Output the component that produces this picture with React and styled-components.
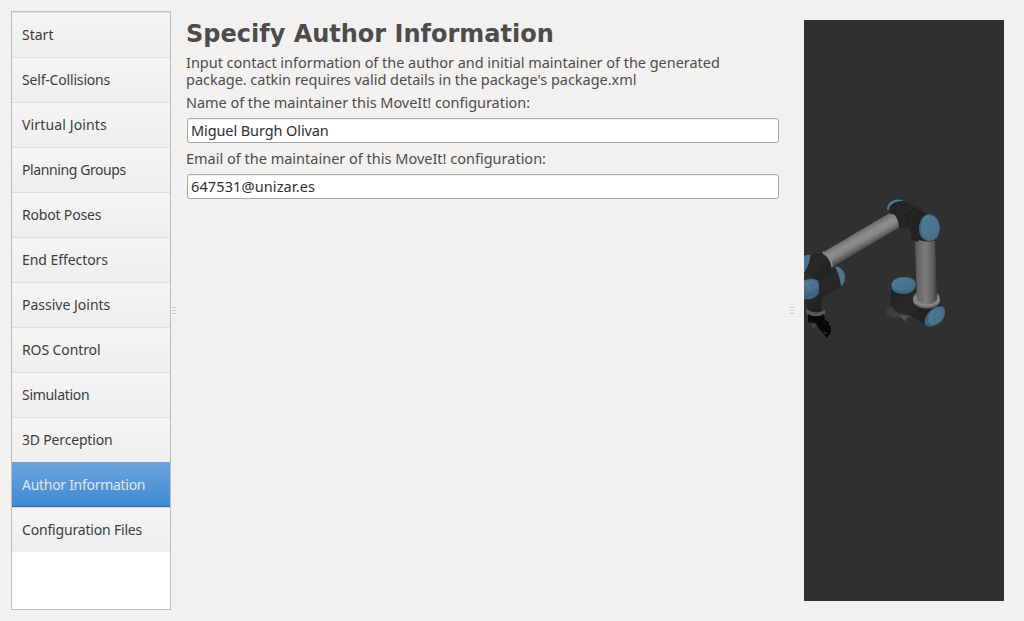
import React from 'react';
import styled, { createGlobalStyle } from 'styled-components';

const GlobalStyle = createGlobalStyle`
  * { box-sizing: border-box; }
  body {
    margin: 0;
    background: #f2f1f0;
    color: #4c4c4c;
    font-family: "Noto Sans", "Open Sans", sans-serif;
    font-size: 14px;
  }
`;

const Window = styled.div`
  display: flex;
  width: 1024px;
  height: 621px;
  padding: 11px 20px 11px 11px;
  background: #f2f1f0;
  overflow: hidden;
`;

const Sidebar = styled.nav`
  flex: 0 0 160px;
  height: 599px;
  border: 1px solid #bfbfba;
  background: #fff;
`;

const NavItem = styled.div`
  display: flex;
  align-items: center;
  height: 45px;
  padding: 0 0 ${p => (p.$active ? 0 : 1)}px 10px;
  border-top: 1px solid ${p => (p.$active ? '#6ba3dc' : '#dddddd')};
  border-bottom: ${p => (p.$active ? '1px solid #2a6cb0' : 'none')};
  background: ${p => (p.$active
    ? 'linear-gradient(#6ba3dc, #3f8ad3)'
    : 'linear-gradient(#f5f5f5, #eeeeee)')};
  color: ${p => (p.$active ? '#e0e6ee' : '#3c3c3c')};
  font-size: 14px;
  letter-spacing: ${p => p.$track || 0}px;
  white-space: nowrap;
`;

const Handle = styled.div`
  display: flex;
  flex-direction: column;
  justify-content: center;
  align-items: flex-start;
  gap: 2px;
  width: 7px;
  height: 599px;
  padding-left: 1px;
`;

const Grip = styled.i`
  width: 4px;
  height: 1px;
  background: #c9c8c6;
  box-shadow: 0 1px #fbfbfb;
`;

const Content = styled.main`
  width: 611px;
  padding: 9px 10px 0 8px;
`;

const Title = styled.h1`
  margin: 0;
  font: bold 24px/28px "DejaVu Sans", sans-serif;
  white-space: nowrap;
`;

const Description = styled.p`
  max-width: 560px;
  margin: 6px 0 0;
  font-size: 14.5px;
  line-height: 17px;
  letter-spacing: -0.03px;
`;

const Label = styled.span`
  display: block;
  font-size: 14.5px;
  line-height: 17px;
  letter-spacing: ${p => p.$track || 0}px;
  white-space: nowrap;
`;

const Field = styled.label`
  display: block;
  height: 50px;
  margin-top: 6px;
`;

const Input = styled.div`
  width: 592px;
  height: 25px;
  margin: 7px 0 0 1px;
  padding-left: 3px;
  border: 1px solid #aaa8a2;
  border-radius: 3px;
  background: #fff;
  box-shadow: inset 0 1px #f0efee;
  color: #2f2f2f;
  font-size: 14.5px;
  line-height: 22px;
  letter-spacing: ${p => p.$track || 0}px;
`;

const Viewport = styled.div`
  width: 200px;
  height: 581px;
  margin: 9px 0 0 8px;
  background: #303030;
`;

const pages = [
  ['Start', 0],
  ['Self-Collisions', -0.18],
  ['Virtual Joints', 0.14],
  ['Planning Groups', -0.4],
  ['Robot Poses', -0.18],
  ['End Effectors', -0.06],
  ['Passive Joints', 0],
  ['ROS Control', -0.1],
  ['Simulation', -0.3],
  ['3D Perception', -0.18],
  ['Author Information', -0.29],
  ['Configuration Files', -0.18],
];

function Robot() {
  return (
    <svg width="200" height="581" viewBox="804 20 200 581" display="block">
      <defs>
        <linearGradient id="arm" gradientUnits="userSpaceOnUse" x1="855" y1="232" x2="864" y2="248">
          <stop offset="0" stopColor="#686868" />
          <stop offset="0.4" stopColor="#8d8d8d" />
          <stop offset="0.65" stopColor="#858585" />
          <stop offset="1" stopColor="#505050" />
        </linearGradient>
        <linearGradient id="post">
          <stop offset="0" stopColor="#484848" />
          <stop offset="0.15" stopColor="#656565" />
          <stop offset="0.5" stopColor="#7c7c7c" />
          <stop offset="0.85" stopColor="#5a5a5a" />
          <stop offset="1" stopColor="#363636" />
        </linearGradient>
        <linearGradient id="joint" x1="0" y1="0" x2="1" y2="1">
          <stop offset="0" stopColor="#1d1d1d" />
          <stop offset="0.4" stopColor="#2a2a2a" />
          <stop offset="1" stopColor="#1b1b1b" />
        </linearGradient>
        <linearGradient id="forearm" x1="0" y1="0" x2="0.6" y2="1">
          <stop offset="0" stopColor="#1c1c1c" />
          <stop offset="0.5" stopColor="#292929" />
          <stop offset="1" stopColor="#1b1b1b" />
        </linearGradient>
        <linearGradient id="cap" x1="0" y1="0" x2="1" y2="1">
          <stop offset="0" stopColor="#527c95" />
          <stop offset="1" stopColor="#416b87" />
        </linearGradient>
      </defs>

      <path d="M887 309l4-3 22 10-4 2-4 4-3-4-7-1-1 2-4-3-3-1z" fill="#3d3d3d" />
      <path d="M900 315l8 1-4 5z" fill="#555" />
      <path d="M891 286v19c2 7 11 10 18 10l19 11 8-3 4-19-24-5-1-14z" fill="url(#joint)" />
      <path d="M891.500 285c1-5 6-8 13-8 6 0 11 2 11 6v4c-2 5-7 7-12 7-6 0-12-3-12-6z" fill="#3c657e" />
      <ellipse cx="903.500" cy="284.500" rx="11.800" ry="7" fill="url(#cap)" />

      <path d="M912 301l11 20 7 5 12-17-2-9z" fill="#222" />
      <path d="M925 319c2-7 10-14 17-13 5 2 3 10-1 15-4 4-10 7-14 5-2-1-3-4-2-7z" fill="#3a637e" />
      <ellipse cx="936.500" cy="316" rx="10" ry="7" transform="rotate(-48 936.500 316)" fill="url(#cap)" />
      <path d="M935 314l1-1M938 317l1-1M934 320h1" stroke="#375d74" fill="none" />
      <path d="M913 298c0-10 27-10 27 0v4c-2 8-23 9-27 0z" fill="#656565" />
      <ellipse cx="926.500" cy="299.500" rx="13.200" ry="7.200" fill="#858585" />
      <path d="M914.500 238h20.500l2 61c-3 7-17 7-20 0z" fill="url(#post)" />

      <path d="M887 210c0-9 8-12 16-10l-9 9z" fill="#4c7892" />
      <path d="M889 208c3-6 9-7 15-7l17 7 7 13-10 21-6-2-2-11-8-2-12-16z" fill="url(#joint)" />
      <path d="M822 253l66-39c8-2 13 6 12 13l-68 40c-2-7-5-11-10-14z" fill="url(#arm)" />
      <path d="M823 252c5 2 9 8 9 15" fill="none" stroke="#8b8b8b" strokeWidth="1.500" />
      <path d="M889 211c6 2 10 9 10 17l6 1 6-6 1-12-8-7-12 2z" fill="#252525" />
      <path d="M902 202c4 1 10 5 12 10l-6 10 4 12c4 8 17 9 24 6l-6-25-15-6z" fill="#222" />
      <path d="M916 208c-6 3-9 8-9 13" fill="none" stroke="#161616" />
      <path d="M919 229c0-8 4-15 10-15 6 0 10 6 11 13 0 9-5 15-11 14-6 0-10-5-10-12z" fill="#3b657f" />
      <ellipse cx="930" cy="228" rx="9.300" ry="12.500" fill="url(#cap)" />
      <path d="M922 221q3-5 7-5M925 226v1M935 227v1" fill="none" stroke="#638ba2" />

      <path d="M804 256q3-2 7-1c-1 7-3 13-7 18z" fill="#47738c" />
      <path d="M811 255l10-2c5 3 9 7 10 14l-8 16-8-4-11-6q4-5 7-18z" fill="url(#joint)" />
      <path d="M806 302l1-11 9-13c5-7 13-11 22-10l5 17-21 13-1 13c-4 3-11 3-14-1z" fill="url(#forearm)" />
      <path d="M835 267c5-1 10 4 10 10 0 4-1 7-4 9-1-8-3-14-6-19z" fill="#497691" />
      <path d="M804 281c6-4 16-3 15 4v7c-3 7-10 8-15 7z" fill="#3d6781" />
      <ellipse cx="809.500" cy="286" rx="9" ry="6.500" fill="url(#cap)" />
      <path d="M807 284h2M812 283h1M809 288h2M814 287h1" stroke="#6991a6" />
      <path d="M806 308c4 5 14 6 19 2v4c-4 4-14 5-18 0z" fill="#5b5b5b" />
      <path d="M808 314c5 3 11 3 16 0l1 6 4 2v3l2 2v5l-4 6-4-5-4-4-3-6-8-1z" fill="#080808" />
      <path d="M811 324h5l-2 5zM823 321l3 4" fill="#4c4c4c" stroke="#333" strokeWidth="0.500" />
      <path d="M824 332l3 2" stroke="#444" strokeWidth="1" />
    </svg>
  );
}

function Splitter() {
  return <Handle><Grip /><Grip /><Grip /></Handle>;
}

export default function App() {
  return (
    <>
      <GlobalStyle />
      <Window>
        <Sidebar>
          {pages.map(([name, track], i) => (
            <NavItem key={name} $track={track} $active={i === 10}>{name}</NavItem>
          ))}
        </Sidebar>
        <Splitter />
        <Content>
          <Title>Specify Author Information</Title>
          <Description>
            Input contact information of the author and initial maintainer of the generated
            package. catkin requires valid details in the package's package.xml
          </Description>
          <Field>
            <Label $track={-0.04}>Name of the maintainer this MoveIt! configuration:</Label>
            <Input $track={-0.1}>Miguel Burgh Olivan</Input>
          </Field>
          <Field>
            <Label>Email of the maintainer of this MoveIt! configuration:</Label>
            <Input $track={0.12}>647531@unizar.es</Input>
          </Field>
        </Content>
        <Splitter />
        <Viewport><Robot /></Viewport>
      </Window>
    </>
  );
}
